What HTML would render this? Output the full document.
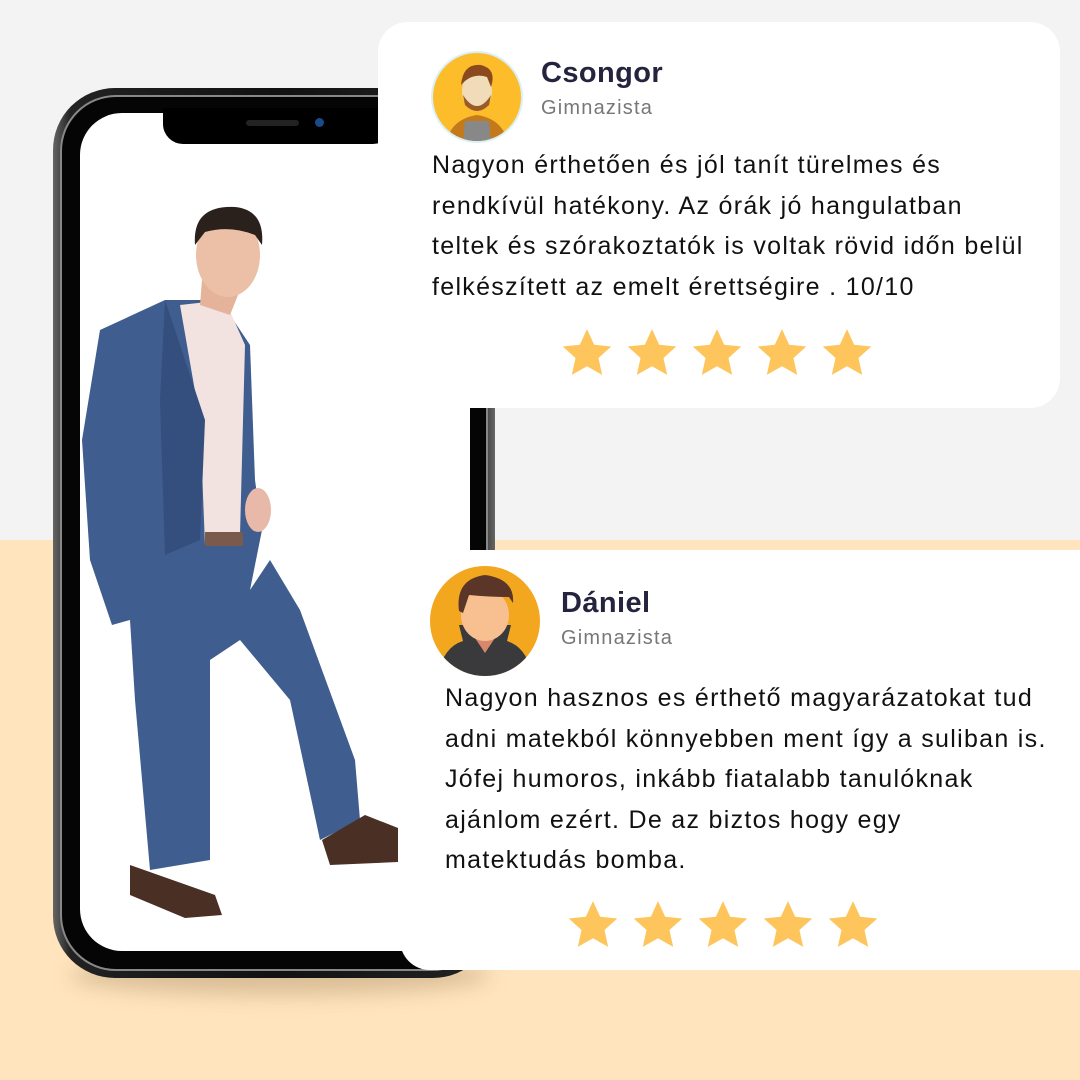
<!DOCTYPE html>
<html><head><meta charset="utf-8"><style>
*{margin:0;padding:0;box-sizing:border-box}
body{width:1080px;height:1080px;position:relative;overflow:hidden;background:#f3f3f3;font-family:"Liberation Sans",sans-serif}
.peach{position:absolute;left:0;top:540px;width:1080px;height:540px;background:#ffe4bd}
.card{position:absolute;background:#fff;border-radius:30px}
.name{position:absolute;font-weight:bold;font-size:29px;letter-spacing:0.4px;color:#24243e}
.role{position:absolute;font-size:20px;letter-spacing:1.2px;color:#777}
.txt{position:absolute;font-size:25px;letter-spacing:1.3px;color:#111;line-height:40.5px;white-space:nowrap}
.stars{position:absolute;display:flex;gap:13px}
</style></head><body>
<div class="peach"></div>
<div style="position:absolute;left:70px;top:955px;width:420px;height:40px;border-radius:50%;background:rgba(150,120,80,.35);filter:blur(10px)"></div>
<!-- phone -->
<div style="position:absolute;left:53px;top:88px;width:442px;height:890px;border-radius:62px;background:linear-gradient(90deg,#666,#222 4%,#111 50%,#222 96%,#666);"></div>
<div style="position:absolute;left:60px;top:95px;width:428px;height:876px;border-radius:56px;background:#050505;border:2px solid #888"></div>
<div style="position:absolute;left:80px;top:113px;width:390px;height:838px;border-radius:42px;background:#fff"></div>
<div style="position:absolute;left:163px;top:108px;width:230px;height:36px;border-radius:0 0 20px 20px;background:#000"></div>
<div style="position:absolute;left:246px;top:120px;width:53px;height:6px;border-radius:3px;background:#222"></div>
<div style="position:absolute;left:315px;top:118px;width:9px;height:9px;border-radius:50%;background:#1a4a8a"></div>
<!-- man -->
<svg style="position:absolute;left:0;top:0" width="1080" height="1080">
<path d="M100 330 L165 300 L220 300 L250 345 L255 480 L262 530 L250 590 L270 560 L300 610 L355 760 L360 820 L320 840 L290 700 L240 640 L210 660 L210 860 L150 870 L135 700 L130 620 L112 625 L90 560 L82 440 Z" fill="#3f5d8f"/>
<path d="M180 305 L225 300 L245 345 L240 535 L205 545 L200 420 Z" fill="#f3e3e0"/>
<path d="M165 300 L205 420 L200 540 L165 555 L160 400 Z" fill="#344f7e"/>
<rect x="205" y="532" width="38" height="14" fill="#7a5a4a"/>
<ellipse cx="258" cy="510" rx="13" ry="22" fill="#e8b8a8"/>
<path d="M202 280 L240 290 L230 315 L200 305 Z" fill="#e4b39a"/>
<ellipse cx="228" cy="255" rx="32" ry="42" fill="#ebc0a6"/>
<path d="M195 245 Q192 205 235 207 Q265 210 262 245 L255 235 Q230 225 205 232 Z" fill="#2a201c"/>
<path d="M130 865 L215 895 L222 915 L185 918 L130 895 Z" fill="#4a2f25"/>
<path d="M322 840 L365 815 L398 828 L398 862 L330 865 Z" fill="#4a2f25"/>
</svg>
<!-- card 1 -->
<div class="card" style="left:378px;top:22px;width:682px;height:386px"></div>
<svg style="position:absolute;left:431px;top:51px" width="92" height="92" viewBox="0 0 92 92">
<circle cx="46" cy="46" r="45" fill="#fdbd2a" stroke="#d8f0f6" stroke-width="2"/>
<clipPath id="c1"><circle cx="46" cy="46" r="44"/></clipPath>
<g clip-path="url(#c1)"><path d="M15 92 Q20 68 46 64 Q72 68 77 92Z" fill="#c47a1a"/><path d="M34 70 L58 70 L60 92 L32 92Z" fill="#888"/>
<ellipse cx="46" cy="40" rx="15" ry="19" fill="#f0dcb8"/><path d="M32 44 Q46 66 60 44 L58 54 Q46 66 34 54Z" fill="#9a5a2a"/><path d="M30 34 Q32 12 50 14 Q66 18 60 36 L56 26 Q44 22 34 30Z" fill="#8a4a1e"/></g>
</svg>
<div class="name" style="left:541px;top:57px">Csongor</div>
<div class="role" style="left:541px;top:97px">Gimnazista</div>
<div class="txt" style="left:432px;top:145px">Nagyon érthetően és jól tanít türelmes és<br>rendkívül hatékony. Az órák jó hangulatban<br>teltek és szórakoztatók is voltak rövid időn belül<br>felkészített az emelt érettségire . 10/10</div>
<div class="stars" style="left:561px;top:328px">
<svg width="52" height="50" viewBox="0 0 24 23"><path d="M12 0.5l3.3 7.2 7.9.8-5.9 5.3 1.7 7.8L12 17.6l-7 4 1.7-7.8L.8 8.5l7.9-.8z" fill="#fdc55b"/></svg>
<svg width="52" height="50" viewBox="0 0 24 23"><path d="M12 0.5l3.3 7.2 7.9.8-5.9 5.3 1.7 7.8L12 17.6l-7 4 1.7-7.8L.8 8.5l7.9-.8z" fill="#fdc55b"/></svg>
<svg width="52" height="50" viewBox="0 0 24 23"><path d="M12 0.5l3.3 7.2 7.9.8-5.9 5.3 1.7 7.8L12 17.6l-7 4 1.7-7.8L.8 8.5l7.9-.8z" fill="#fdc55b"/></svg>
<svg width="52" height="50" viewBox="0 0 24 23"><path d="M12 0.5l3.3 7.2 7.9.8-5.9 5.3 1.7 7.8L12 17.6l-7 4 1.7-7.8L.8 8.5l7.9-.8z" fill="#fdc55b"/></svg>
<svg width="52" height="50" viewBox="0 0 24 23"><path d="M12 0.5l3.3 7.2 7.9.8-5.9 5.3 1.7 7.8L12 17.6l-7 4 1.7-7.8L.8 8.5l7.9-.8z" fill="#fdc55b"/></svg>
</div>
<!-- card 2 -->
<div class="card" style="left:400px;top:550px;width:710px;height:420px"></div>
<svg style="position:absolute;left:429px;top:565px" width="112" height="112" viewBox="0 0 112 112">
<circle cx="56" cy="56" r="55" fill="#f2a71f"/>
<clipPath id="c2"><circle cx="56" cy="56" r="55"/></clipPath>
<g clip-path="url(#c2)"><path d="M8 112 Q14 82 34 76 L30 60 L82 60 L78 76 Q98 82 104 112Z" fill="#3a3a3c"/><path d="M44 70 L68 70 L56 88Z" fill="#d8876a"/>
<ellipse cx="56" cy="50" rx="24" ry="26" fill="#f8c090"/><path d="M30 46 Q26 14 56 10 Q86 14 84 38 L80 32 Q60 32 40 30 L34 48Z" fill="#5a3528"/></g>
</svg>
<div class="name" style="left:561px;top:587px">Dániel</div>
<div class="role" style="left:561px;top:627px">Gimnazista</div>
<div class="txt" style="left:445px;top:678px">Nagyon hasznos es érthető magyarázatokat tud<br>adni matekból könnyebben ment így a suliban is.<br>Jófej humoros, inkább fiatalabb tanulóknak<br>ajánlom ezért. De az biztos hogy egy<br>matektudás bomba.</div>
<div class="stars" style="left:567px;top:900px">
<svg width="52" height="50" viewBox="0 0 24 23"><path d="M12 0.5l3.3 7.2 7.9.8-5.9 5.3 1.7 7.8L12 17.6l-7 4 1.7-7.8L.8 8.5l7.9-.8z" fill="#fdc55b"/></svg>
<svg width="52" height="50" viewBox="0 0 24 23"><path d="M12 0.5l3.3 7.2 7.9.8-5.9 5.3 1.7 7.8L12 17.6l-7 4 1.7-7.8L.8 8.5l7.9-.8z" fill="#fdc55b"/></svg>
<svg width="52" height="50" viewBox="0 0 24 23"><path d="M12 0.5l3.3 7.2 7.9.8-5.9 5.3 1.7 7.8L12 17.6l-7 4 1.7-7.8L.8 8.5l7.9-.8z" fill="#fdc55b"/></svg>
<svg width="52" height="50" viewBox="0 0 24 23"><path d="M12 0.5l3.3 7.2 7.9.8-5.9 5.3 1.7 7.8L12 17.6l-7 4 1.7-7.8L.8 8.5l7.9-.8z" fill="#fdc55b"/></svg>
<svg width="52" height="50" viewBox="0 0 24 23"><path d="M12 0.5l3.3 7.2 7.9.8-5.9 5.3 1.7 7.8L12 17.6l-7 4 1.7-7.8L.8 8.5l7.9-.8z" fill="#fdc55b"/></svg>
</div>
</body></html>
